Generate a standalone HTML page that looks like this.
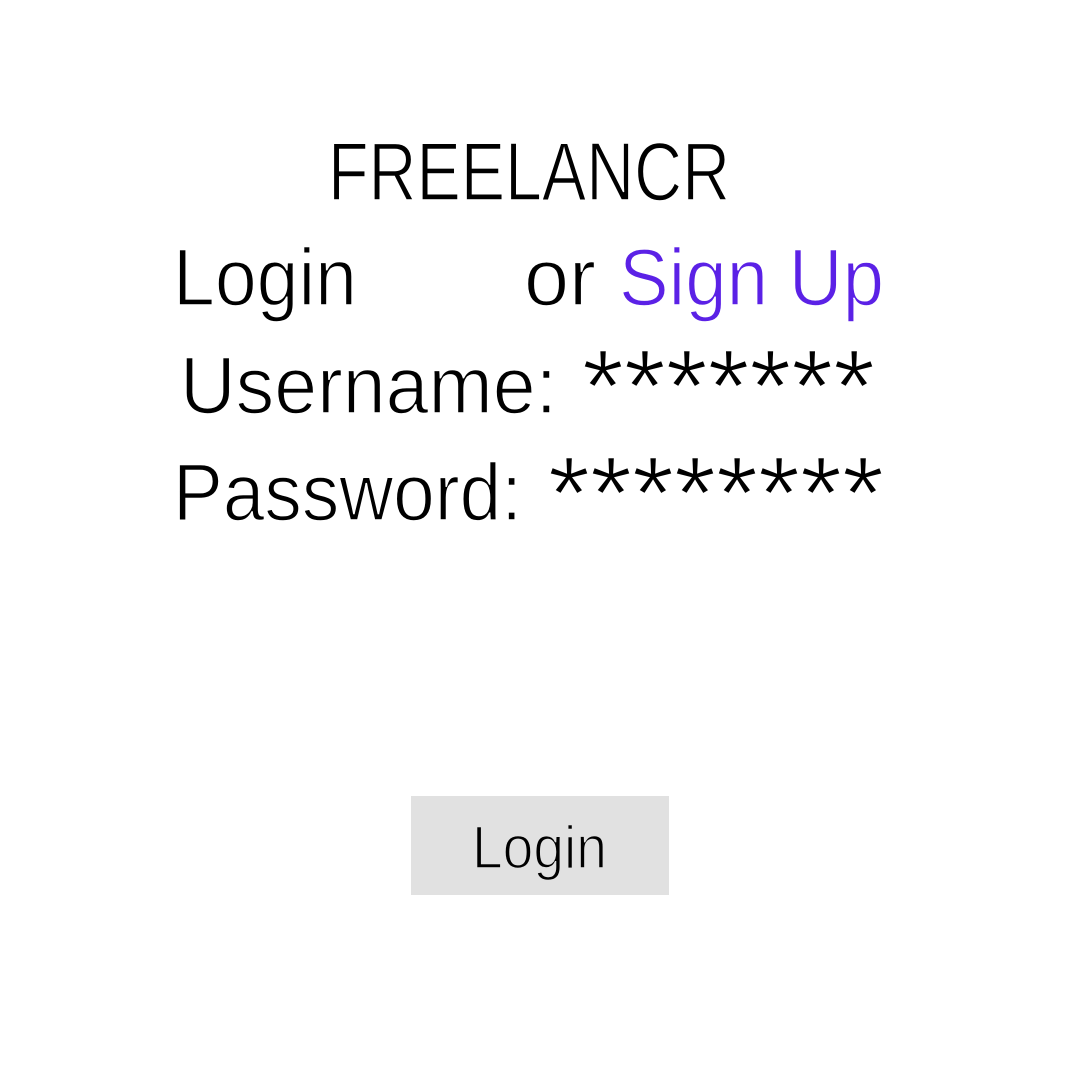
<!DOCTYPE html>
<html>
<head>
<meta charset="utf-8">
<style>
html,body{margin:0;padding:0;background:#fff;width:1080px;height:1080px;overflow:hidden}
svg{display:block}
text{font-family:"Liberation Sans",sans-serif;fill:#000;stroke:#fff;stroke-width:1.6}
</style>
</head>
<body>
<svg width="1080" height="1080" viewBox="0 0 1080 1080" xmlns="http://www.w3.org/2000/svg">
<rect width="1080" height="1080" fill="#fff"/>
<text x="328" y="200" font-size="83" textLength="402" lengthAdjust="spacingAndGlyphs">FREELANCR</text>
<text x="173" y="305" font-size="81" textLength="184" lengthAdjust="spacingAndGlyphs">Login</text>
<text x="524" y="305" font-size="81" textLength="72" lengthAdjust="spacingAndGlyphs">or</text>
<text x="619" y="305" font-size="81" textLength="265" lengthAdjust="spacingAndGlyphs" style="fill:#5b21e6">Sign Up</text>
<text x="180" y="413" font-size="81" textLength="377" lengthAdjust="spacingAndGlyphs">Username:</text>
<text x="582" y="422" font-size="104" textLength="293" lengthAdjust="spacingAndGlyphs">*******</text>
<text x="173" y="520" font-size="81" textLength="349" lengthAdjust="spacingAndGlyphs">Password:</text>
<text x="548" y="529" font-size="104" textLength="336" lengthAdjust="spacingAndGlyphs">********</text>
<rect x="411" y="796" width="258" height="99" fill="#e1e1e1"/>
<text x="472" y="868" font-size="60" textLength="135" lengthAdjust="spacingAndGlyphs" style="stroke:#e1e1e1">Login</text>
</svg>
</body>
</html>
